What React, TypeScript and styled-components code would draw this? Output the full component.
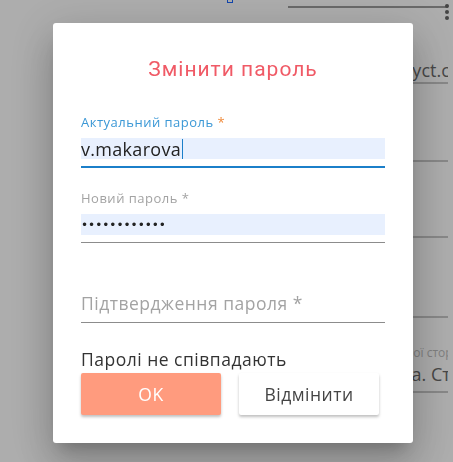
import styled, { createGlobalStyle } from 'styled-components';

const GlobalStyle = createGlobalStyle`
  html, body {
    margin: 0;
    padding: 0;
    height: 100%;
    background: #fff;
    overflow: hidden;
  }
  #root {
    height: 100%;
  }
`;

export default function App() {
  return (
    <>
      <GlobalStyle />
      <Page>
        <TopMark />
        <SideColumn>
          <TopBar>
            <Dots>
              <i />
              <i />
              <i />
            </Dots>
          </TopBar>
          <BgRow $height={74}>
            <BgValue $shift={-146} $bottom={0}>
              v.makarova@prodyct.com
            </BgValue>
          </BgRow>
          <BgRow $height={76} />
          <BgRow $height={74} />
          <BgRow $height={78} />
          <BgRow $height={73}>
            <BgLabel>Адреса робочої сторінки</BgLabel>
            <BgValue $shift={-67} $bottom={5}>
              вул. Нова. Старокиївська
            </BgValue>
          </BgRow>
        </SideColumn>
      </Page>
      <Overlay>
        <Dialog>
          <Title>Змінити пароль</Title>
          <Field $first>
            <Label $active>
              Актуальний пароль <Star>*</Star>
            </Label>
            <InputBox $active>
              <Filled>
                v.makarova<Caret />
              </Filled>
            </InputBox>
          </Field>
          <Field>
            <Label>Новий пароль *</Label>
            <InputBox>
              <Filled $dots>••••••••••••</Filled>
            </InputBox>
          </Field>
          <Field $gap={48}>
            <InputBox>
              <Placeholder>Підтвердження пароля *</Placeholder>
            </InputBox>
          </Field>
          <ErrorText>Паролі не співпадають</ErrorText>
          <Actions>
            <Button $primary>OK</Button>
            <Button>Відмінити</Button>
          </Actions>
        </Dialog>
      </Overlay>
    </>
  );
}

const Page = styled.div`
  height: 100%;
  display: flex;
  justify-content: flex-end;
  font-family: 'Open Sans', sans-serif;
`;

const TopMark = styled.span`
  position: absolute;
  left: 227px;
  top: -2px;
  width: 4px;
  height: 3px;
  border: 1px solid #1a66ff;
  background: #fff;
`;

const SideColumn = styled.div`
  width: 160px;
  padding-right: 5px;
  display: flex;
  flex-direction: column;
`;

const TopBar = styled.div`
  position: relative;
  height: 6px;
  border-bottom: 2px solid #9c9c9c;
`;

const Dots = styled.div`
  position: absolute;
  right: -1px;
  top: 4px;
  display: flex;
  flex-direction: column;
  gap: 2px;

  i {
    width: 4px;
    height: 4px;
    border-radius: 50%;
    background: #666;
  }
`;

const BgRow = styled.div<{ $height: number }>`
  height: ${p => p.$height}px;
  border-bottom: 2px solid #c8c8c8;
  display: flex;
  flex-direction: column;
  justify-content: flex-end;
  padding-left: 117px;
  overflow: hidden;
  white-space: nowrap;
`;

const BgLabel = styled.div`
  font-size: 12px;
  color: #bdbdbd;
  margin-left: -72px;
  line-height: 18px;
`;

const BgValue = styled.div<{ $shift: number; $bottom: number }>`
  font-size: 18px;
  color: #6a6a6a;
  line-height: 24px;
  margin-left: ${p => p.$shift}px;
  padding-bottom: ${p => p.$bottom}px;
`;

const Overlay = styled.div`
  position: fixed;
  inset: 0;
  background: rgba(0, 0, 0, 0.32);
  display: flex;
  align-items: flex-start;
  justify-content: flex-start;
  padding: 23px 0 0 53px;
`;

const Dialog = styled.div`
  width: 360px;
  box-sizing: border-box;
  padding: 34px 28px 28px;
  background: #fff;
  border-radius: 3px;
  box-shadow: 0 11px 15px -7px rgba(0, 0, 0, 0.2), 0 24px 38px 3px rgba(0, 0, 0, 0.14),
    0 9px 46px 8px rgba(0, 0, 0, 0.12);
  display: flex;
  flex-direction: column;
  font-family: 'Open Sans', sans-serif;
`;

const Title = styled.h2`
  margin: 0;
  font-family: Roboto, sans-serif;
  font-weight: 400;
  font-size: 21px;
  letter-spacing: 1px;
  line-height: 24px;
  color: #f05a66;
  text-align: center;
`;

const Field = styled.div<{ $first?: boolean; $gap?: number }>`
  margin-top: ${p => (p.$first ? 32 : p.$gap ?? 21)}px;
  display: flex;
  flex-direction: column;
`;

const Label = styled.label<{ $active?: boolean }>`
  font-size: 13px;
  letter-spacing: 0.5px;
  line-height: 18px;
  color: ${p => (p.$active ? '#3b98d6' : '#a3a3a3')};
  margin-bottom: 7px;
`;

const Star = styled.span`
  color: #f08a3a;
`;

const InputBox = styled.div<{ $active?: boolean }>`
  padding-bottom: 7px;
  border-bottom: ${p => (p.$active ? '2px solid #1b7fc9' : '1px solid #8c8c8c')};
`;

const Filled = styled.div<{ $dots?: boolean }>`
  height: 21px;
  background: #e8f0fe;
  display: flex;
  align-items: center;
  font-family: ${p => (p.$dots ? "'DejaVu Sans', sans-serif" : "'Open Sans', sans-serif")};
  font-size: ${p => (p.$dots ? '12px' : '18px')};
  letter-spacing: ${p => (p.$dots ? '0' : '0.3px')};
  color: #222;
  white-space: nowrap;
`;

const Caret = styled.span`
  display: inline-block;
  width: 1px;
  height: 20px;
  background: #1b7fc9;
  margin-left: 1px;
`;

const Placeholder = styled.div`
  height: 24px;
  line-height: 24px;
  font-size: 17.5px;
  letter-spacing: 0.5px;
  color: #a3a3a3;
`;

const ErrorText = styled.div`
  margin-top: 25px;
  font-size: 17.5px;
  letter-spacing: 0.5px;
  line-height: 22px;
  color: #333;
`;

const Actions = styled.div`
  margin-top: 3px;
  display: flex;
  gap: 18px;
`;

const Button = styled.button<{ $primary?: boolean }>`
  width: 140px;
  height: 42px;
  border: none;
  border-radius: 2px;
  font-family: 'Open Sans', sans-serif;
  font-size: 17.5px;
  letter-spacing: 0.5px;
  cursor: pointer;
  background: ${p => (p.$primary ? '#ff9b7e' : '#fff')};
  color: ${p => (p.$primary ? '#fff' : '#444')};
  box-shadow: 0 2px 3px rgba(0, 0, 0, 0.25);
`;
